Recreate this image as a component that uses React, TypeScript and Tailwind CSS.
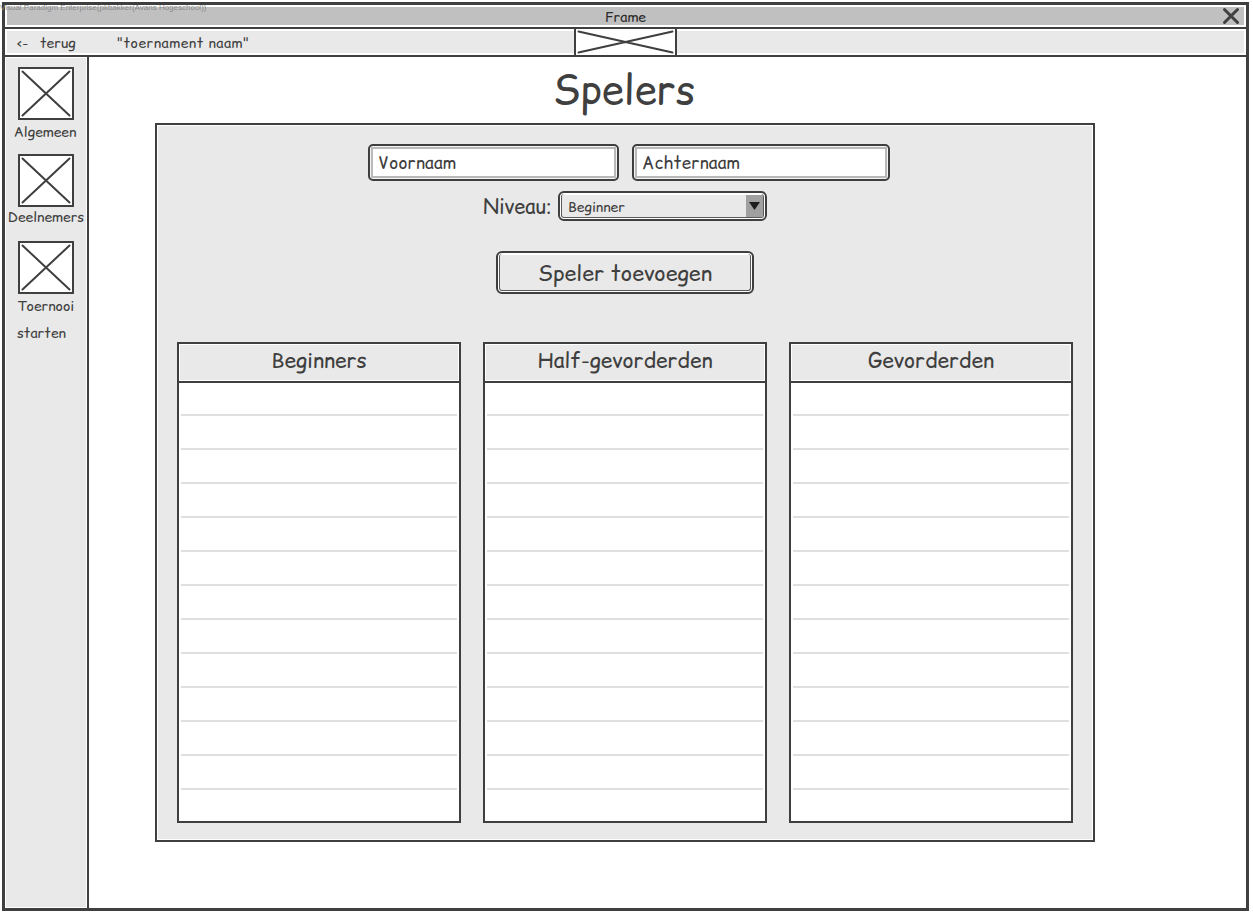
type CrossProps = { width: number; height: number };

/** Diagonal strokes of an image placeholder. */
function Cross({ width, height }: CrossProps) {
  return (
    <svg width={width} height={height} className="block" fill="none" stroke="#3f3f3f" strokeWidth="2" strokeLinecap="round">
      <path d={`M2.5 2.5L${width - 2.5} ${height - 2.5}M${width - 2.5} 2.5L2.5 ${height - 2.5}`} />
    </svg>
  );
}

function SidebarImage() {
  return (
    <div className="mx-auto h-[53px] w-14 shrink-0 border-2 border-[#3f3f3f] bg-white">
      <Cross width={52} height={49} />
    </div>
  );
}

function TitleBar() {
  return (
    <header className="h-6 shrink-0 border-b-2 border-[#3f3f3f] bg-white p-0.5">
      <div className="grid h-[18px] grid-cols-[1fr_auto_1fr] bg-[#c0c0c0] text-sm leading-5">
        <span />
        <span className="text-[#2b2b2b]">Frame</span>
        <svg width="18" height="18" className="mr-1 block justify-self-end" fill="none" stroke="#3f3f3f" strokeWidth="3" strokeLinecap="round">
          <path d="M2.5 2.5L15.5 15.5M15.5 2.5L2.5 15.5" />
        </svg>
      </div>
    </header>
  );
}

function Toolbar() {
  return (
    <nav className="grid h-7 shrink-0 grid-cols-[1fr_auto_1fr] border-b-2 border-[#3f3f3f] bg-white text-sm leading-6">
      <div className="my-0.5 ml-0.5 flex h-[22px] bg-[#e9e9e9] pl-2.5">
        <span className="w-[23px]">&lt;-</span>
        <span className="w-[77px]">terug</span>
        <span className="tracking-[0.5px]">"toernament naam"</span>
      </div>
      <div className="h-[26px] border-x-2 border-[#3f3f3f] bg-white">
        <Cross width={99} height={26} />
      </div>
      <div className="my-0.5 mr-0.5 h-[22px] bg-[#e9e9e9]" />
    </nav>
  );
}

function Sidebar() {
  return (
    <aside className="flex w-[84px] shrink-0 flex-col border-r-2 border-[#3f3f3f] bg-[#e9e9e9] pt-2.5 text-center text-sm shadow-[inset_0_0_0_1px_#fff]">
      <SidebarImage />
      <div className="h-[34px] pr-0.5 leading-6">Algemeen</div>
      <SidebarImage />
      <div className="h-[34px] leading-5">Deelnemers</div>
      <SidebarImage />
      <div className="pl-3 text-left leading-6">Toernooi</div>
      <div className="pl-3 text-left leading-[30px]">starten</div>
    </aside>
  );
}

function Field({ text, className }: { text: string; className: string }) {
  return (
    <div className={`h-[37px] rounded-[5px] border-2 border-[#3f3f3f] bg-[#f4f4f4] p-px ${className}`}>
      <div className="h-full border-2 border-[#b9b9b9] bg-white pl-[5px] text-[17px] leading-7 tracking-[0.2px]">{text}</div>
    </div>
  );
}

function LevelSelect() {
  return (
    <div className="h-[30px] w-[209px] rounded-[6px] border-2 border-[#3f3f3f] bg-white p-px">
      <div className="flex h-6 rounded-[3px] border-x border-b border-[#5a5a5a] bg-[#e9e9e9] shadow-[inset_0_1px_0_#fff]">
        <span className="flex-1 pl-[6px] text-sm leading-[26px]">Beginner</span>
        <svg width="17" height="23" className="mt-px block">
          <rect width="17" height="22" fill="#a0a0a0" />
          <path d="M3 7H14L8.5 15Z" fill="#1f1f1f" />
        </svg>
      </div>
    </div>
  );
}

function AddButton() {
  return (
    <button className="mx-auto mt-[30px] block h-[43px] w-[258px] rounded-[6px] border-2 border-[#3f3f3f] bg-white p-px">
      <span className="block h-[37px] rounded-[3px] border-x border-b border-[#5a5a5a] bg-[#e9e9e9] text-[21.5px] leading-[39px] shadow-[inset_0_1px_0_#fff]">
        Speler toevoegen
      </span>
    </button>
  );
}

function PlayerTable({ title }: { title: string }) {
  return (
    <section className="h-[481px] w-[284px] border-2 border-[#3f3f3f] bg-white">
      <h2 className="h-[39px] border-b-2 border-[#3f3f3f] bg-[#e9e9e9] text-center text-[21px] leading-[33px] shadow-[inset_0_0_0_1px_#fff]">
        {title}
      </h2>
      <div className="mx-0.5">
        <div className="h-[33px] border-b-2 border-[#dfdfdf]" />
        {Array.from({ length: 11 }, (_, i) => (
          <div key={i} className="h-[34px] border-b-2 border-[#dfdfdf]" />
        ))}
      </div>
    </section>
  );
}

export default function App() {
  return (
    <div className="relative h-[915px] w-[1253px] overflow-hidden bg-white pt-0.5 pl-0.5 font-['Comic_Relief','Comic_Sans_MS','Comic_Neue',fantasy] text-[#3f3f3f]">
      <div className="flex h-[909px] w-[1247px] flex-col border-[3px] border-[#3f3f3f]">
        <TitleBar />
        <Toolbar />
        <div className="flex min-h-0 flex-1">
          <Sidebar />
          <main className="ml-[66px] w-[940px]">
            <h1 className="h-[66px] pr-0.5 text-center text-[40px] leading-[66px]">Spelers</h1>
            <div className="h-[719px] border-2 border-[#3f3f3f] bg-[#e9e9e9] pt-[19px] shadow-[inset_0_0_0_1px_#fff]">
              <div className="flex gap-[13px] pl-[211px]">
                <Field text="Voornaam" className="w-[251px]" />
                <Field text="Achternaam" className="w-[258px]" />
              </div>
              <div className="mt-2.5 flex h-[30px] pl-[326px]">
                <span className="w-[75px] text-xl leading-8">Niveau:</span>
                <LevelSelect />
              </div>
              <AddButton />
              <div className="mt-12 flex gap-[22px] pl-5">
                <PlayerTable title="Beginners" />
                <PlayerTable title="Half-gevorderden" />
                <PlayerTable title="Gevorderden" />
              </div>
            </div>
          </main>
        </div>
      </div>
      <div className="absolute top-[3px] left-0 font-['Liberation_Sans',sans-serif] text-[8px] leading-[10px] whitespace-nowrap text-[#8a8a8a]">
        Visual Paradigm Enterprise(pkbakker(Avans Hogeschool))
      </div>
    </div>
  );
}
